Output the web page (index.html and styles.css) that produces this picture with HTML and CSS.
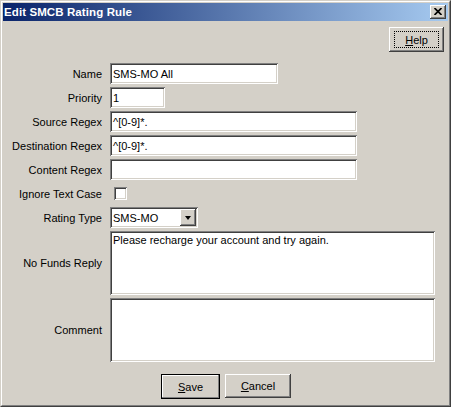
FILE: index.html
```html
<!DOCTYPE html>
<html>
<head>
<meta charset="utf-8">
<link rel="stylesheet" href="styles.css">
</head>
<body>
<div class="window">
  <div class="frame">
    <div class="titlebar">
      <span class="title">Edit SMCB Rating Rule</span>
      <div class="close raised">
        <svg width="8" height="7" viewBox="0 0 8 7"><path d="M0.5 0 L7.5 7 M7.5 0 L0.5 7" stroke="#000" stroke-width="1.7" fill="none"/></svg>
      </div>
    </div>
    <div class="content">
      <div class="toprow">
        <div class="btn raised help"><span class="focus"><u>H</u>elp</span></div>
      </div>
      <div class="form">
        <div class="label">Name</div>
        <div class="field w-name">SMS-MO All</div>
        <div class="label">Priority</div>
        <div class="field w-pri">1</div>
        <div class="label">Source Regex</div>
        <div class="field w-regex">^[0-9]*.</div>
        <div class="label">Destination Regex</div>
        <div class="field w-regex">^[0-9]*.</div>
        <div class="label">Content Regex</div>
        <div class="field w-regex"></div>
        <div class="label">Ignore Text Case</div>
        <div class="checkrow"><div class="checkbox"></div></div>
        <div class="label">Rating Type</div>
        <div class="combo">
          <span class="combo-text">SMS-MO</span>
          <div class="arrow raised"><span class="tri"></span></div>
        </div>
        <div class="label">No Funds Reply</div>
        <div class="area">Please recharge your account and try again.</div>
        <div class="label">Comment</div>
        <div class="area"></div>
      </div>
      <div class="buttons">
        <div class="btn default save"><u>S</u>ave</div>
        <div class="btn raised cancel"><u>C</u>ancel</div>
      </div>
    </div>
  </div>
</div>
</body>
</html>
```
FILE: styles.css
```css
html, body {
  margin: 0;
  padding: 0;
  background: #d4d0c8;
}
body {
  font-family: "Liberation Sans", Arial, sans-serif;
  font-size: 11px;
  color: #000;
}
.window {
  width: 451px;
  height: 407px;
  box-sizing: border-box;
  border: 1px solid;
  border-color: #d4d0c8 #404040 #404040 #d4d0c8;
  background: #d4d0c8;
}
.frame {
  height: 100%;
  box-sizing: border-box;
  border: 1px solid;
  border-color: #ffffff #808080 #808080 #ffffff;
  padding: 1px;
  display: flex;
  flex-direction: column;
}
.titlebar {
  height: 18px;
  background: linear-gradient(to right, #0a246a, #a6caf0);
  display: flex;
  align-items: center;
  justify-content: space-between;
  padding: 0 1px 0 1px;
}
.title {
  color: #fff;
  font-weight: bold;
  font-size: 11.5px;
  letter-spacing: 0.1px;
}
.raised {
  background: #d4d0c8;
  box-shadow: inset -1px -1px #404040, inset 1px 1px #ffffff, inset -2px -2px #808080, inset 2px 2px #d4d0c8;
}
.close {
  width: 16px;
  height: 14px;
  display: flex;
  align-items: center;
  justify-content: center;
  margin-right: 1px;
}
.close svg {
  display: block;
  margin-left: -1px;
  margin-top: -1px;
}
.content {
  flex: 1;
  display: flex;
  flex-direction: column;
}
.toprow {
  display: flex;
  justify-content: flex-end;
  margin-top: 6px;
  padding-right: 4px;
}
.btn {
  box-sizing: border-box;
  height: 25px;
  display: flex;
  align-items: center;
  justify-content: center;
  font-size: 11px;
}
.btn u {
  text-underline-offset: 1px;
}
.help {
  width: 55px;
  padding: 4px 5px 4px 5px;
}
.help .focus {
  flex: 1;
  align-self: stretch;
  display: flex;
  align-items: center;
  justify-content: center;
  border: 1px dotted #000;
}
.form {
  margin-top: 11px;
  display: grid;
  grid-template-columns: 99px auto;
  column-gap: 8px;
  row-gap: 3px;
  align-items: center;
}
.label {
  text-align: right;
  white-space: nowrap;
}
.field, .area, .combo, .checkbox {
  box-shadow: inset 1px 1px #808080, inset -1px -1px #ffffff, inset 2px 2px #404040, inset -2px -2px #d4d0c8;
}
.field {
  box-sizing: border-box;
  height: 21px;
  background: #fff;
  display: flex;
  align-items: center;
  padding: 1px 3px 0 3px;
  white-space: nowrap;
}
.w-name { width: 168px; }
.w-pri { width: 55px; }
.w-regex { width: 247px; }
.checkrow {
  height: 21px;
  display: flex;
  align-items: center;
}
.checkbox {
  width: 13px;
  height: 13px;
  background: #fff;
  margin-left: 4px;
}
.combo {
  box-sizing: border-box;
  width: 88px;
  height: 21px;
  background: #fff;
  display: flex;
  align-items: center;
  justify-content: space-between;
  padding: 2px;
}
.combo-text {
  padding-left: 1px;
  padding-top: 1px;
}
.arrow {
  width: 16px;
  height: 17px;
  display: flex;
  align-items: center;
  justify-content: center;
}
.tri {
  width: 0;
  height: 0;
  border-left: 3.5px solid transparent;
  border-right: 3.5px solid transparent;
  border-top: 4px solid #000;
  margin-left: -1px;
}
.area {
  box-sizing: border-box;
  width: 325px;
  height: 64px;
  background: #fff;
  padding: 3px 3px;
}
.buttons {
  margin-top: 12px;
  display: flex;
  justify-content: center;
  gap: 5px;
  padding-left: 1px;
}
.save {
  width: 59px;
  border: 1px solid #000;
  box-shadow: inset -1px -1px #808080, inset 1px 1px #ffffff;
  background: #d4d0c8;
}
.cancel {
  width: 66px;
  height: 24px;
}
```
